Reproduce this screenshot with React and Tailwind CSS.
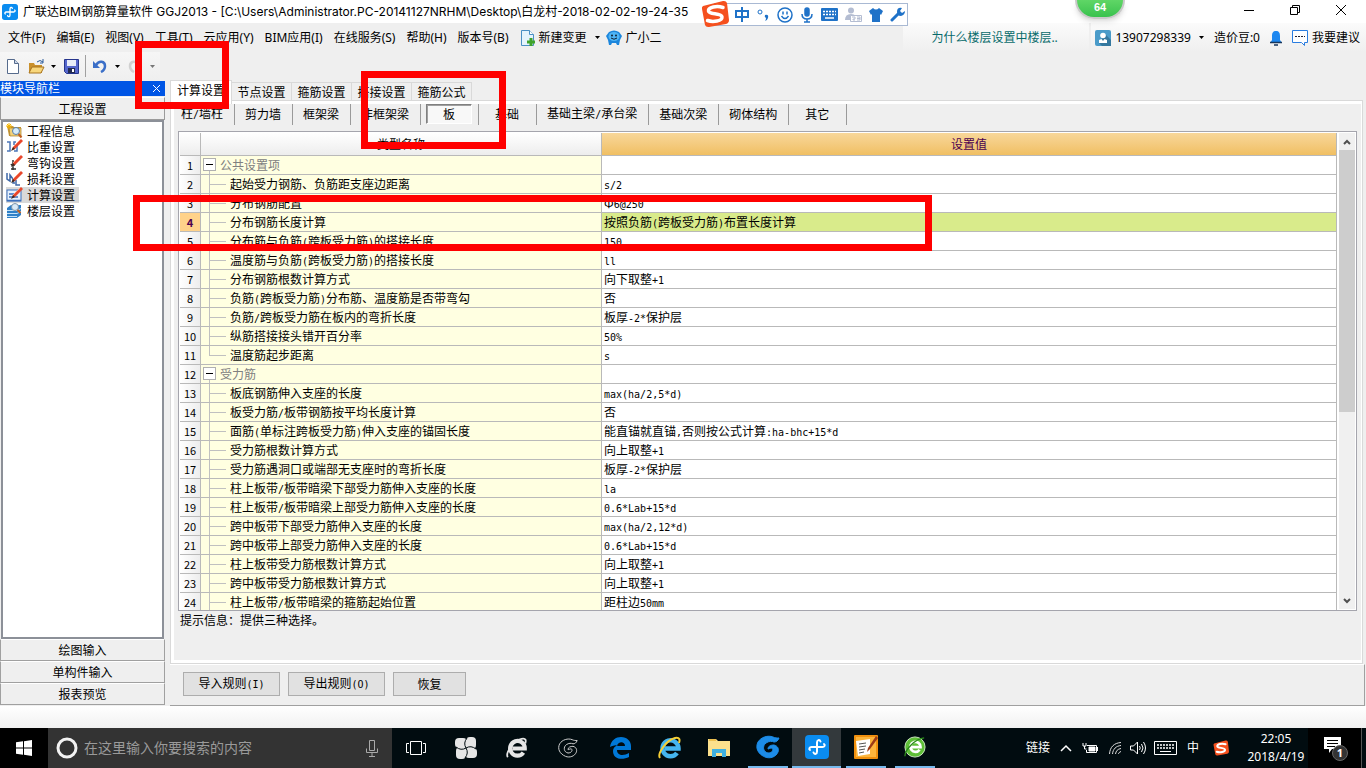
import React, { useState } from "react";

const menus = ["文件(F)", "编辑(E)", "视图(V)", "工具(T)", "云应用(Y)", "BIM应用(I)", "在线服务(S)", "帮助(H)", "版本号(B)"];

const navItems = [
  { name: "工程信息", icon: "folder" },
  { name: "比重设置", icon: "weight" },
  { name: "弯钩设置", icon: "hook" },
  { name: "损耗设置", icon: "loss" },
  { name: "计算设置", icon: "calc" },
  { name: "楼层设置", icon: "floor" },
];

const tabs = ["计算设置", "节点设置", "箍筋设置", "搭接设置", "箍筋公式"];
const parts = ["柱/墙柱", "剪力墙", "框架梁", "非框架梁", "板", "基础", "基础主梁/承台梁", "基础次梁", "砌体结构", "其它"];

const rows = [
  { group: true, name: "公共设置项", value: "" },
  { name: "起始受力钢筋、负筋距支座边距离", value: "s/2" },
  { name: "分布钢筋配置", value: "Φ6@250" },
  { name: "分布钢筋长度计算", value: "按照负筋(跨板受力筋)布置长度计算" },
  { name: "分布筋与负筋(跨板受力筋)的搭接长度", value: "150" },
  { name: "温度筋与负筋(跨板受力筋)的搭接长度", value: "ll" },
  { name: "分布钢筋根数计算方式", value: "向下取整+1" },
  { name: "负筋(跨板受力筋)分布筋、温度筋是否带弯勾", value: "否" },
  { name: "负筋/跨板受力筋在板内的弯折长度", value: "板厚-2*保护层" },
  { name: "纵筋搭接接头错开百分率", value: "50%" },
  { name: "温度筋起步距离", value: "s", last: true },
  { group: true, name: "受力筋", value: "" },
  { name: "板底钢筋伸入支座的长度", value: "max(ha/2,5*d)" },
  { name: "板受力筋/板带钢筋按平均长度计算", value: "否" },
  { name: "面筋(单标注跨板受力筋)伸入支座的锚固长度", value: "能直锚就直锚,否则按公式计算:ha-bhc+15*d" },
  { name: "受力筋根数计算方式", value: "向上取整+1" },
  { name: "受力筋遇洞口或端部无支座时的弯折长度", value: "板厚-2*保护层" },
  { name: "柱上板带/板带暗梁下部受力筋伸入支座的长度", value: "la" },
  { name: "柱上板带/板带暗梁上部受力筋伸入支座的长度", value: "0.6*Lab+15*d" },
  { name: "跨中板带下部受力筋伸入支座的长度", value: "max(ha/2,12*d)" },
  { name: "跨中板带上部受力筋伸入支座的长度", value: "0.6*Lab+15*d" },
  { name: "柱上板带受力筋根数计算方式", value: "向上取整+1" },
  { name: "跨中板带受力筋根数计算方式", value: "向上取整+1" },
  { name: "柱上板带/板带暗梁的箍筋起始位置", value: "距柱边50mm" },
];

// half-width characters use a mono face so they take half of a full-width cell
function Mixed({ text }) {
  return text.split(/([\x20-\x7e]+)/).map((run, i) =>
    /^[\x20-\x7e]+$/.test(run) ? (
      <span key={i} className="font-['DejaVu_Sans_Mono',monospace] text-[10px]">{run}</span>
    ) : (
      run
    )
  );
}

function Caret({ className = "" }) {
  return (
    <svg className={className} width="5" height="3" viewBox="0 0 5 3">
      <path d="M0 0h5L2.5 3z" fill="currentColor" />
    </svg>
  );
}

function AppLogo({ size }) {
  return (
    <svg width={size} height={size} viewBox="0 0 24 24">
      <rect width="24" height="24" rx="4" fill="#0a8cf0" />
      <path
        d="M15.500 6.500C14.500 4 12 5 12 7.500v9c0 2.500-2.500 3.500-3.500 1M5 15c-1.500-1-.5-3 1.500-3h11c2 0 3-2 1.500-3"
        stroke="#fff"
        strokeWidth="2"
        fill="none"
        strokeLinecap="round"
      />
    </svg>
  );
}

function SogouLogo({ size }) {
  return (
    <svg width={size} height={size} viewBox="0 0 28 28">
      <path d="M2 6L22 1q3-.5 4 2l2 17q0 3-3 4L8 27q-3 .5-4-2L1 9q-.5-2 1-3z" fill="#f5501e" />
      <path d="M22 7.500C16 5.500 7 7 7.500 11c.5 4 13 1.500 13.500 6 .3 4-9 5.500-14.500 3.500" stroke="#fff" strokeWidth="3.500" fill="none" strokeLinecap="round" />
    </svg>
  );
}

function Pencil() {
  return (
    <>
      <path d="M15 0l-8 8-1 3 3-1 8-8z" fill="#e8472c" />
      <path d="M14 1L7 8" stroke="#ff9a7c" />
      <path d="M7 8l-2 4 4-2z" fill="#3b2a22" />
    </>
  );
}

function NavIcon({ name }) {
  return (
    <svg width="17" height="16" viewBox="0 0 17 16">
      {name === "folder" && (
        <>
          <path d="M1 3h6l1 1h7v9H3z" fill="#c99a3a" />
          <path d="M3 5h12v8H4z" fill="#f3d27a" stroke="#a87b24" strokeWidth=".7" />
          <path d="M3 0v6M0 3h6M1 1l4 4M5 1L1 5" stroke="#f5b400" />
          <circle cx="10" cy="8" r="3.500" fill="#d6ecfa" stroke="#5a7da5" />
          <path d="M12.500 11l3 3.500" stroke="#c06020" strokeWidth="2" />
        </>
      )}
      {name === "weight" && (
        <>
          <path d="M1 3h3v9H1M10 3H8v3M8 12h3V6" stroke="#4b76b8" strokeWidth="1.500" fill="none" />
          <Pencil />
        </>
      )}
      {name === "hook" && (
        <>
          <path d="M7 5v10M5 14h5M5 9c1 2 3 2 4 0" stroke="#333" strokeWidth="1.500" fill="none" />
          <Pencil />
        </>
      )}
      {name === "loss" && (
        <>
          <path d="M1 2v6l3 2V4l3 4v4h2M10 9v5h4" stroke="#3f68a8" strokeWidth="1.500" fill="none" />
          <Pencil />
        </>
      )}
      {name === "calc" && (
        <>
          <rect x="1" y="3" width="14" height="11" fill="#e6f1fc" stroke="#3c70bd" />
          <path d="M1 13.500h14M3 7h5M3 10h9" stroke="#3c70bd" strokeWidth="1.500" />
          <Pencil />
        </>
      )}
      {name === "floor" && (
        <>
          <path d="M1 5l4-3h10v10l-4 3H1z" fill="#2f80c8" />
          <path d="M1 7.500h10l4-2M1 10.500h10l4-2M1 13.500h10" stroke="#c4e2f8" fill="none" />
          <circle cx="9" cy="4" r="3.500" fill="#d9eaf7" stroke="#7c93a8" />
          <path d="M11.500 7l3 3" stroke="#c06020" strokeWidth="2" />
        </>
      )}
    </svg>
  );
}

function TitleBar() {
  return (
    <header className="h-[23px] shrink-0 flex items-center bg-white pl-0.5">
      <AppLogo size={16} />
      <h1 className="ml-[5px] text-[12px] whitespace-nowrap font-['Inter','Noto_Sans_CJK_SC',sans-serif]">
        广联达BIM钢筋算量软件 GGJ2013 - [C:\Users\Administrator.PC-20141127NRHM\Desktop\白龙村-2018-02-02-19-24-35
      </h1>
      <div className="ml-auto pr-0.5 self-start flex items-center">
        <button aria-label="最小化" className="w-[46px] h-5 flex justify-center items-center">
          <svg width="10" height="10"><path d="M0 5.500h10" stroke="#000" /></svg>
        </button>
        <button aria-label="还原" className="w-[46px] h-5 flex justify-center items-center">
          <svg width="10" height="10" fill="none" stroke="#000"><path d="M.5 2.500h7v7h-7zM2.500 2.500v-2h7v7h-2" /></svg>
        </button>
        <button aria-label="关闭" className="w-[46px] h-5 flex justify-center items-center">
          <svg width="10" height="10" stroke="#000"><path d="M0 0l10 10M10 0L0 10" /></svg>
        </button>
      </div>
    </header>
  );
}

function MenuBar() {
  return (
    <nav className="h-[29px] shrink-0 flex items-center text-[12px] whitespace-nowrap">
      <div className="flex items-center gap-[11px] pl-2">
        {menus.map((m) => (
          <button key={m}>{m}</button>
        ))}
      </div>
      <button className="ml-3 flex items-center gap-1">
        <svg width="14" height="16" viewBox="0 0 14 16">
          <path d="M.5.5h8l4 4v11H.5z" fill="#e4f3fc" stroke="#4a8fc4" />
          <path d="M8.500.5v4h4" fill="#fff" stroke="#4a8fc4" />
          <path d="M8.500 8h3v2.500H14v3h-2.500V16h-3v-2.500H6v-3h2.500z" fill="#3fa32b" />
        </svg>
        新建变更
        <Caret className="ml-1" />
      </button>
      <button className="ml-1.5 flex items-center gap-1">
        <svg width="16" height="16" viewBox="0 0 16 16">
          <path d="M3 2q5-3 10 0l3 4-2 4-1 5h-2l-1-2H6l-1 2H3L2 10 0 6z" fill="#1c86dc" />
          <ellipse cx="8" cy="6.500" rx="5.500" ry="4.500" fill="#4fb4f5" />
          <circle cx="6" cy="5.500" r="1" fill="#123" />
          <circle cx="10" cy="5.500" r="1" fill="#123" />
          <path d="M5 8q3 2.500 6 0" stroke="#123" fill="none" />
        </svg>
        广小二
      </button>
      <div className="ml-auto h-full flex">
        <div className="w-[186px] pl-7 flex items-center bg-linear-to-b from-[#fbfbfb] to-[#efefef]">
          <a href="#help" className="text-[#086b6b]">为什么楼层设置中楼层..</a>
        </div>
        <div className="ml-0.5 pl-1 pr-1.5 flex items-center bg-linear-to-b from-[#fbfbfb] to-[#efefef]">
          <svg width="16" height="16" viewBox="0 0 16 16">
            <rect width="16" height="16" rx="2" fill="#4a9bc9" />
            <path d="M10 4l6 6v6H7l-3-3z" fill="#35789f" />
            <circle cx="8" cy="5.500" r="2.800" fill="#fff" />
            <path d="M4 13V10l2.500-1L8 11l1.500-2 2.500 1v3z" fill="#fff" />
          </svg>
          <button className="ml-1 flex items-center">
            13907298339
            <Caret className="ml-2" />
          </button>
          <span className="ml-2.5">造价豆:0</span>
          <button aria-label="通知" className="ml-2.5">
            <svg width="12" height="16" viewBox="0 0 12 16">
              <path d="M6 1c3 0 4 2 4 5v4l2 3H0l2-3V6c0-3 1-5 4-5z" fill="#1e88f0" />
              <path d="M0 12.500h12M4 15h4" stroke="#17365c" strokeWidth="1.500" />
            </svg>
          </button>
          <button className="ml-2.5 flex items-center gap-1">
            <svg width="16" height="16" viewBox="0 0 16 16" fill="none" stroke="#2a7de0">
              <path d="M.5.5h15v12h-3v3l-3-3h-9z" fill="#fff" />
              <path d="M3 6.500h10" stroke="#223" strokeDasharray="2 1" />
            </svg>
            我要建议
          </button>
        </div>
      </div>
    </nav>
  );
}

function ToolBar() {
  return (
    <div className="h-7 shrink-0 flex">
      <div className="w-[160px] pl-[7px] flex items-center bg-linear-to-b from-[#f6f6f6] to-[#efefef]">
        <button aria-label="新建">
          <svg width="12" height="15" viewBox="0 0 12 15">
            <path d="M.5.5h7l4 4v10H.5z" fill="#fff" stroke="#566b8c" />
            <path d="M7.500.5v4h4" fill="#ccd8ea" stroke="#566b8c" />
          </svg>
        </button>
        <button aria-label="打开" className="ml-[9px] flex items-center gap-1.5">
          <svg width="17" height="15" viewBox="0 0 17 15">
            <path d="M1 14V4h5l1 2h7v8z" fill="#c9902c" />
            <path d="M1 14L4 8h12l-3 6z" fill="#f8d77c" stroke="#a87420" />
            <path d="M9 3q3-3 6 0M15 0v4h-3" stroke="#2c5c9c" fill="none" />
          </svg>
          <Caret />
        </button>
        <button aria-label="保存" className="ml-2">
          <svg width="15" height="15" viewBox="0 0 15 15">
            <path d="M.5.5h14v14h-12l-2-2z" fill="#5566cc" stroke="#26358c" />
            <path d="M3 1h9v6H3z" fill="#e8ecf8" />
            <path d="M4 9h7v5H4z" fill="#222a50" />
            <path d="M8 10h2v3H8z" fill="#fff" />
          </svg>
        </button>
        <span className="ml-1.5 w-px h-[22px] bg-[#a0a0a0]" />
        <button aria-label="撤销" className="ml-[7px] flex items-center gap-2">
          <svg width="14" height="14" viewBox="0 0 14 14">
            <path d="M3 6C6 1 12 2 12 7c0 3-2 5-4 6" stroke="#3b6fc8" strokeWidth="2.500" fill="none" />
            <path d="M0 2v7h7z" fill="#3b6fc8" />
          </svg>
          <Caret />
        </button>
        <button aria-label="重做" disabled className="ml-2 flex items-center gap-2 text-[#777]">
          <svg width="14" height="14" viewBox="0 0 14 14">
            <path d="M11 6C8 1 2 2 2 7c0 3 2 5 4 6" stroke="#d0d0d0" strokeWidth="2.500" fill="none" />
            <path d="M14 2v7H7z" fill="#d0d0d0" />
          </svg>
          <Caret />
        </button>
      </div>
    </div>
  );
}

function Sidebar({ selected, onSelect }) {
  return (
    <aside className="w-[165px] shrink-0 flex flex-col pt-px pb-px">
      <div className="h-[15px] pr-1 flex items-center justify-between bg-[#0055e5] text-white leading-[14px]">
        <h2 className="self-start">模块导航栏</h2>
        <button aria-label="关闭导航栏">
          <svg width="9" height="9" stroke="#fff"><path d="M1 1l7 7M8 1L1 8" /></svg>
        </button>
      </div>
      <button className="mt-px h-[23px] border border-[#9a9a9a] border-t-white bg-[#efefef]">工程设置</button>
      <ul className="flex-1 min-h-0 mx-px pl-[3px] pt-px border-2 border-[#8c9098] bg-white">
        {navItems.map((item) => (
          <li key={item.name} className="h-4">
            <button
              onClick={() => onSelect(item.name)}
              className={`h-4 pr-1 flex items-center gap-1 leading-4 ${item.name === selected ? "bg-[#d9d9d9]" : ""}`}
            >
              <NavIcon name={item.icon} />
              {item.name}
            </button>
          </li>
        ))}
      </ul>
      {["绘图输入", "单构件输入", "报表预览"].map((t) => (
        <button key={t} className="h-[22px] border border-[#a0a0a0] border-t-white bg-[#efefef]">{t}</button>
      ))}
    </aside>
  );
}

function TreeCell({ row }) {
  if (row.group) {
    return (
      <div className="h-[18px] pl-0.5 flex text-[#808080]">
        <div className="flex flex-col items-center">
          <button aria-label="折叠" className="mt-0.5 w-[13px] h-[13px] border border-[#b0b0b0] bg-white flex items-center justify-center">
            <span className="w-[7px] h-px bg-black" />
          </button>
          <span className="w-px flex-1 bg-[#c0c0c0]" />
        </div>
        <span className="ml-1">{row.name}</span>
      </div>
    );
  }
  return (
    <div className="h-[18px] pl-2 flex">
      <div className="w-[17px] flex flex-col">
        <span className="h-[10px] border-l border-b border-[#c0c0c0]" />
        <span className={row.last ? "flex-1" : "flex-1 border-l border-[#c0c0c0]"} />
      </div>
      <span className="ml-1"><Mixed text={row.name} /></span>
    </div>
  );
}

function SettingsTable() {
  const [current, setCurrent] = useState(3);
  return (
    <div className="flex-1 min-h-0 flex overflow-hidden border border-[#a5a5ad] bg-white pl-px pt-px">
      <div className="flex-1 min-w-0 overflow-hidden">
        <table className="w-full table-fixed border-separate border-spacing-0 leading-[18px]">
          <colgroup>
            <col className="w-[21px]" />
            <col className="w-[401px]" />
            <col />
          </colgroup>
          <thead>
            <tr className="h-[23px]">
              <th className="p-0 border-r border-b border-[#b9b9b9] bg-linear-to-b from-white to-[#ededed]" />
              <th className="p-0 font-normal border-r border-b border-[#b9b9b9] bg-linear-to-b from-white to-[#ededed]">类型名称</th>
              <th className="p-0 font-normal border-r border-b border-[#b9b9b9] bg-linear-to-b from-[#f8d79a] to-[#f0bf62] text-[#4b0050]">设置值</th>
            </tr>
          </thead>
          <tbody>
            {rows.map((row, i) => (
              <tr key={i} className="h-[19px]" onClick={() => setCurrent(i)}>
                <th
                  scope="row"
                  className={`p-0 text-center text-[11px] border-r border-b border-[#b9b9b9] ${
                    i === current ? "bg-[#ffd28a] text-[#4b0050] font-semibold" : "font-normal bg-linear-to-r from-white to-[#ededed]"
                  }`}
                >
                  {i + 1}
                </th>
                <td className="p-0 whitespace-nowrap border-r border-b border-[#b9b9b9] bg-[#ffffe1]">
                  <TreeCell row={row} />
                </td>
                <td className={`p-0 pl-0.5 whitespace-nowrap border-r border-b border-[#b9b9b9] ${i === current ? "bg-[#d9eb8b]" : "bg-white"}`}>
                  <div className="h-[18px]"><Mixed text={row.value} /></div>
                </td>
              </tr>
            ))}
          </tbody>
        </table>
      </div>
      <div className="w-4 ml-0.5 mr-px mb-px shrink-0 flex flex-col bg-[#f0f0f0]">
        <button aria-label="向上滚动" className="h-[17px] flex items-center justify-center">
          <svg width="8" height="6" fill="none" stroke="#505050" strokeWidth="2"><path d="M1 5l3-3 3 3" /></svg>
        </button>
        <div className="h-[262px] bg-[#cdcdcd]" />
        <button aria-label="向下滚动" className="mt-auto h-4 flex items-center justify-center">
          <svg width="8" height="6" fill="none" stroke="#505050" strokeWidth="2"><path d="M1 1l3 3 3-3" /></svg>
        </button>
      </div>
    </div>
  );
}

function Content() {
  const [tab, setTab] = useState("计算设置");
  const [part, setPart] = useState("板");
  return (
    <main className="flex-1 min-w-0 ml-[5px] flex flex-col whitespace-nowrap">
      <div className="h-5 shrink-0 flex items-end">
        {tabs.map((t) => (
          <button
            key={t}
            onClick={() => setTab(t)}
            className={
              t === tab
                ? "relative z-10 self-start h-6 w-[62px] border-l border-r border-t border-[#d9d9d9] bg-white pb-1.5"
                : "h-[18px] w-[60px] border-r border-t border-[#d9d9d9] leading-[17px]"
            }
          >
            {t}
          </button>
        ))}
      </div>
      <section className="flex-1 min-h-0 mr-[3px] flex flex-col border border-[#d9d9d9] bg-white p-[3px] pr-px">
        <div className="flex-1 min-h-0 flex flex-col bg-[#efefef] px-1">
          <div className="h-[27px] shrink-0 flex -ml-[7px]">
            {parts.map((p) => (
              <div key={p} className="h-[21px] min-w-[58px] pl-[5px] pr-[6px] border-r border-[#9a9a9a] flex">
                <button
                  onClick={() => setPart(p)}
                  className={
                    p === part
                      ? "flex-1 h-5 bg-[#f8f8f8] border border-t-[#808080] border-l-[#808080] border-r-white border-b-white shadow-[inset_1px_1px_0_#a0a0a0]"
                      : "flex-1 h-5 px-[5px] text-center"
                  }
                >
                  <Mixed text={p} />
                </button>
              </div>
            ))}
          </div>
          <SettingsTable />
          <p className="h-[49px] shrink-0 pl-0.5 leading-[18px]">提示信息：提供三种选择。</p>
        </div>
      </section>
      <footer className="h-[42px] shrink-0 mr-px flex gap-2 pl-[13px] pt-[7px] border-t border-t-white border-r border-b border-[#a0a0a0]">
        <button className="w-[97px] h-6 border border-[#adadad] bg-[#e1e1e1]"><Mixed text="导入规则(I)" /></button>
        <button className="w-[97px] h-6 border border-[#adadad] bg-[#e1e1e1]"><Mixed text="导出规则(O)" /></button>
        <button className="w-[73px] h-6 border border-[#adadad] bg-[#e1e1e1]">恢复</button>
      </footer>
    </main>
  );
}

function ELogo({ color, size = 22, ring }) {
  return (
    <svg width={size} height={size} viewBox="0 0 24 24">
      <path d="M19 17a8 8 0 1 1 1.500-4.500H7" stroke={color} strokeWidth="4.500" fill="none" />
      {ring && <path d="M2 22C-1 18 8 4 17 2c5-1 5 2 4 5" stroke={ring} strokeWidth="2" fill="none" />}
    </svg>
  );
}

const swirl =
  "M23 3c-1 3-3 4-5 4-2-1-5-1-8 1-4 3-3 9 2 10 4 0 6-3 4-5-2 0-3 1-4 1 0-3 3-4 6-4 4 1 5 4 4 7-2 5-8 7-13 5C2 19-1 13 2 7 5 2 12 0 17 2c2 1 4 1 6 1z";

const pinned = [
  { name: "任务视图", icon: <svg width="20" height="14" fill="none" stroke="#fff"><path d="M4.500.5h11v13h-11zM3 2.500H.5v9H3M17 2.500h2.500v9H17" /></svg> },
  {
    name: "风车",
    icon: (
      <svg width="22" height="22" viewBox="0 0 22 22">
        <g fill="#e6e6e6">
          <rect x="0" y="1" width="12" height="10" rx="4" />
          <rect x="11" y="0" width="10" height="12" rx="4" />
          <rect x="10" y="11" width="12" height="10" rx="4" />
          <rect x="1" y="10" width="10" height="12" rx="4" />
          <path d="M5 5h12v12H5z" />
        </g>
        <path d="M11 11Q8 6 12 1M11 11q5-3 10 1M11 11q3 5-1 10M11 11q-5 3-10-1" stroke="#010c10" fill="none" />
      </svg>
    ),
  },
  { name: "浏览器", icon: <ELogo color="#e6e6e6" ring="#e6e6e6" /> },
  { name: "G 浏览器", icon: <svg width="20" height="20" viewBox="0 0 24 24"><path d={swirl} stroke="#ccc" strokeWidth="1.200" fill="none" /></svg> },
];

const running = [
  {
    name: "Edge",
    icon: (
      <svg width="21" height="22" viewBox="0 0 21 22">
        <path d="M0 10C1 3 6 0 11 0c6 0 10 4 10 9v4H7c0 6 7 6 12 3v4c-6 3-16 3-16-6 0-3 2-5 5-6-4 0-6 1-8 2zm7-1h8c0-5-7-5-8 0z" fill="#0078d7" />
      </svg>
    ),
  },
  { name: "Internet Explorer", icon: <ELogo color="#45b5ef" ring="#f6cf35" size={24} /> },
  {
    name: "文件资源管理器",
    icon: (
      <svg width="22" height="18" viewBox="0 0 22 18">
        <path d="M0 0h8l2 2h12v15H0z" fill="#fbe08c" />
        <path d="M1 1h7" stroke="#e9b63b" strokeWidth="1.500" />
        <path d="M4 18v-8h14v8h-4v-4H8v4z" fill="#3fb0e0" />
      </svg>
    ),
  },
  { name: "G", bar: true, icon: <svg width="24" height="24" viewBox="0 0 24 24"><path d={swirl} fill="#1c8ce8" stroke="#1c8ce8" /></svg> },
  { name: "GGJ2013", bar: true, active: true, icon: <AppLogo size={24} /> },
  {
    name: "编辑器",
    bar: true,
    icon: (
      <svg width="24" height="24" viewBox="0 0 24 24">
        <rect width="24" height="24" rx="1" fill="#f0900f" />
        <rect x="2" y="2" width="20" height="20" fill="#fcb53c" />
        <path d="M2 6l14-2v15L4 21z" fill="#fff" />
        <path d="M5 9l7-1M5 12l7-1M5 15l6-1M5 18l5-1" stroke="#555" />
        <path d="M22 1l-8 12-1 4 3-3 8-11z" fill="#9c3b16" />
      </svg>
    ),
  },
  {
    name: "360浏览器",
    bar: true,
    icon: (
      <svg width="22" height="22" viewBox="0 0 24 24">
        <circle cx="12" cy="12" r="11" fill="#5fbf38" stroke="#d8f0cc" />
        <path d="M17 15a5.500 5.500 0 1 1 1-3H8" stroke="#fff" strokeWidth="3" fill="none" />
        <path d="M1 22C1 15 12 3 22 2" stroke="#2c8a1c" strokeWidth="1.500" fill="none" />
      </svg>
    ),
  },
];

function TaskBar() {
  return (
    <footer className="h-10 shrink-0 flex bg-[#010c10] text-white whitespace-nowrap">
      <button aria-label="开始" className="w-12 bg-black flex items-center justify-center">
        <svg width="16" height="16" fill="#fff"><path d="M0 2.300l7-1v6.200H0zM8 1.200L16 0v7.500H8zM0 8.500h7v6.200l-7-1zM8 8.500h8V16l-8-1.200z" /></svg>
      </button>
      <label className="w-[344px] bg-[#333] pl-2 pr-3.5 flex items-center">
        <svg width="22" height="22"><circle cx="11" cy="11" r="9" fill="none" stroke="#f2f2f2" strokeWidth="3" /></svg>
        <input
          type="text"
          aria-label="搜索"
          placeholder="在这里输入你要搜索的内容"
          className="flex-1 min-w-0 ml-1.5 text-[14px] bg-transparent outline-none placeholder-[#9a9a9a]"
        />
        <svg width="12" height="17" fill="none" stroke="#aaa"><path d="M3.500.5h5v10h-5zM.5 8.500v4h11v-4M6 13v3M3 16.500h6" /></svg>
      </label>
      {pinned.map((p, i) => (
        <button key={p.name} aria-label={p.name} className={`${i === 0 ? "w-12" : "w-[51px]"} flex items-center justify-center`}>
          {p.icon}
        </button>
      ))}
      <div className="ml-[3px] flex">
        {running.map((r) => (
          <button key={r.name} aria-label={r.name} className={`w-[49px] flex flex-col items-center ${r.active ? "bg-[#33393c]" : ""}`}>
            <span className="flex-1 flex items-center justify-center">{r.icon}</span>
            {r.bar && <span className={`h-0.5 bg-[#76b9ed] ${r.active ? "w-full" : "w-10"}`} />}
          </button>
        ))}
      </div>
      <div className="ml-auto flex items-center text-[12px]">
        <span>链接</span>
        <button aria-label="显示隐藏的图标" className="ml-2.5">
          <svg width="12" height="8" fill="none" stroke="#fff" strokeWidth="1.500"><path d="M1 7l5-5 5 5" /></svg>
        </button>
        <svg className="ml-2.5" width="16" height="13" viewBox="0 0 16 13" fill="none" stroke="#fff"><path d="M5 3.500h9.500v7h-10V8M15.500 5v4M1 1v3h3V1M2.500 4v3h2" /><path d="M7 5h6v4H7z" fill="#fff" /></svg>
        <svg className="ml-2.5" width="14" height="14" fill="none" stroke="#ddd"><path d="M1.500 13C2 6 6 2 13 1.500M4.500 13C5 8 8 5 13 4.500M7.500 13c.5-3 2-5 5.500-5.500M10.500 13c0-1 1-2 2.500-2.500" /></svg>
        <svg className="ml-2" width="16" height="14" fill="none" stroke="#fff"><path d="M.5 5h3l4-4v12l-4-4h-3zM9.500 5q1.500 2 0 4M11.500 3q3 4 0 8M13.500 1q4 6 0 12" /></svg>
        <svg className="ml-2" width="23" height="14" fill="none" stroke="#fff"><path d="M.5.5h22v13H.5z" /><path d="M3 4h17M3 7h17" strokeDasharray="2 1" strokeWidth="1.500" /><path d="M6 10.500h11" /></svg>
        <span className="ml-2.5">中</span>
        <span className="ml-3.5"><SogouLogo size={16} /></span>
        <time className="ml-4 w-[62px] text-center leading-[18px]">
          22:05
          <br />
          2018/4/19
        </time>
        <button aria-label="通知中心" className="w-[54px] ml-px h-10 bg-black flex items-center justify-center border-r border-[#555]">
          <svg className="ml-1" width="25" height="25" viewBox="0 0 25 25">
            <path d="M0 1h17v12H8l-3 4v-4H0z" fill="#fff" />
            <path d="M3 4.500h11M3 7.500h11M3 10.500h8" stroke="#000" />
            <circle cx="16" cy="17" r="7.500" fill="#333" stroke="#666" />
            <text x="16" y="21" textAnchor="middle" fontSize="11" fontWeight="bold" fill="#fff">1</text>
          </svg>
        </button>
        <span className="w-1" />
      </div>
    </footer>
  );
}

function InputMethodBar() {
  return (
    <div className="absolute left-[701px] top-0 z-20 flex items-center text-[#1f72c8]">
      <span className="relative z-10"><SogouLogo size={28} /></span>
      <div className="mt-px -ml-[15px] pl-5 pr-0.5 h-[23px] flex items-center gap-[7px] bg-white border border-[#a9b9d3]">
        <svg width="14" height="15" fill="none" stroke="currentColor" strokeWidth="2"><path d="M1 4h12v6H1zM7 0v15" /></svg>
        <svg width="14" height="14"><circle cx="4" cy="4" r="2" fill="none" stroke="currentColor" /><path d="M9 7q4-1 3 3-1 3-3 3 1-1 1-3-2-1-1-3z" fill="currentColor" /></svg>
        <svg width="16" height="16" fill="none" stroke="currentColor" strokeWidth="1.500"><circle cx="8" cy="8" r="7" /><path d="M4.500 9q3.500 5 7 0M6 4.500v3M10 4.500v3" /></svg>
        <svg width="14" height="16" fill="none" stroke="currentColor" strokeWidth="1.500"><rect x="5" y="1" width="4" height="8" rx="2" fill="currentColor" /><path d="M2 7q0 5 5 5t5-5M7 12v3M4 15h6" /></svg>
        <svg width="17" height="13"><rect width="17" height="13" rx="1" fill="currentColor" /><path d="M2 3.500h13M2 6.500h13" stroke="#fff" strokeWidth="1.500" strokeDasharray="2 1" /><path d="M4 10h9" stroke="#fff" strokeWidth="1.500" /></svg>
        <svg width="17" height="15"><circle cx="6" cy="3.500" r="3" fill="#b4bdd2" /><path d="M0 13q0-6 6-6t6 6z" fill="#b4bdd2" /><path d="M5.500 8.500h11v6h-11z" fill="#fff" stroke="#b4bdd2" /><path d="M7 10h3v2H8v1h2M12 10h3v3h-3M12 11.500h3" stroke="#b4bdd2" fill="none" /></svg>
        <svg width="14" height="14" fill="currentColor"><path d="M4 0q3 3 6 0l4 3-2 4-1-1v8H3V6L2 7 0 3z" /></svg>
        <svg width="15" height="15"><path d="M2 13l6-6" stroke="currentColor" strokeWidth="3" strokeLinecap="round" /><path d="M12 1q-5-1-5 4 0 4 4 4 4-1 4-5l-3 2-2-2z" fill="currentColor" /></svg>
      </div>
    </div>
  );
}

export default function App() {
  const [nav, setNav] = useState("计算设置");
  return (
    <div className="relative h-screen min-h-[480px] flex flex-col overflow-hidden bg-[#efefef] text-black text-[12px] leading-4 font-['Noto_Sans','Noto_Sans_CJK_SC',sans-serif]">
      <TitleBar />
      <MenuBar />
      <ToolBar />
      <div className="flex-1 min-h-0 flex font-['Noto_Sans_CJK_SC',sans-serif]">
        <Sidebar selected={nav} onSelect={setNav} />
        <Content />
      </div>
      <div className="h-[22px] shrink-0 bg-linear-to-b from-white to-[#f1f1f1]" />
      <TaskBar />

      <InputMethodBar />
      {/* speed ball, only its lower part hangs into the window */}
      <div className="absolute right-[241px] top-0 z-20 w-[50px] h-[19px] pt-px rounded-b-full border-2 border-t-0 border-[#c9c9c9] bg-linear-to-b from-[#5fd666] to-[#38c24e] shadow-md text-center text-[11px] leading-[13px] font-bold font-['Liberation_Sans',sans-serif] text-white">
        64
      </div>

      {/* annotation frames */}
      <div className="absolute left-[135px] top-[41px] z-30 w-[94px] h-[68px] border-[7px] border-[#ff0000] pointer-events-none" />
      <div className="absolute left-[361px] top-[71px] z-30 w-[145px] h-[78px] border-[7px] border-[#ff0000] pointer-events-none" />
      <div className="absolute left-[133px] top-[195px] z-30 w-[799px] h-[56px] border-[7px] border-[#ff0000] pointer-events-none" />
    </div>
  );
}
